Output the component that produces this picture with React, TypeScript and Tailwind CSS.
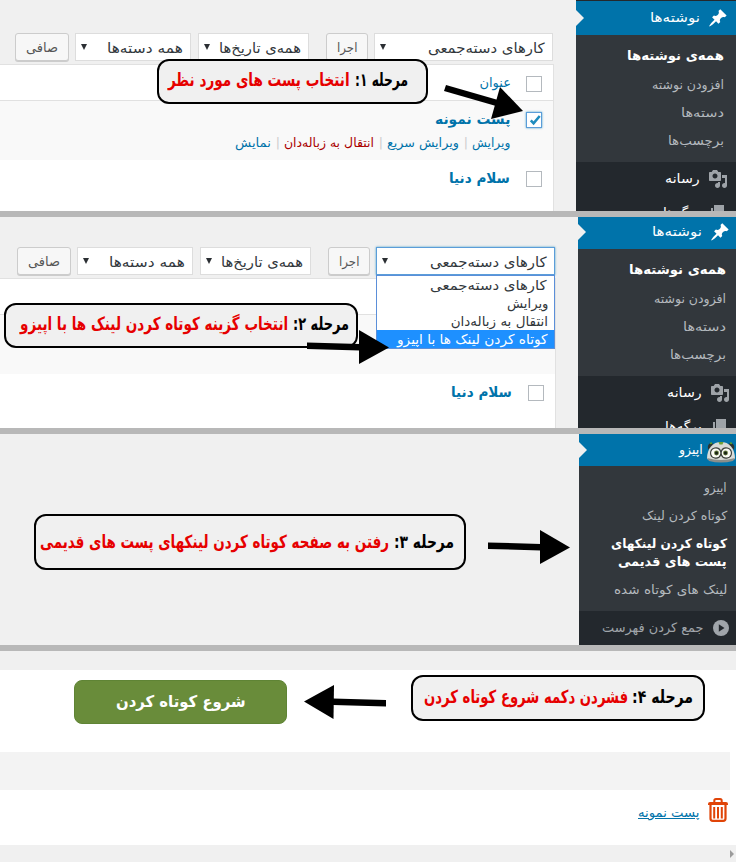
import { useLayoutEffect, useRef, useState, type ReactNode } from "react";
import clsx from "clsx";

/* One line of text, stretched horizontally to the width of its box. */
function Fit({ className, children }: { className: string; children: ReactNode }) {
  const outer = useRef<HTMLSpanElement>(null);
  const inner = useRef<HTMLSpanElement>(null);
  const [scale, setScale] = useState(1);
  useLayoutEffect(() => {
    if (outer.current && inner.current) {
      setScale(outer.current.clientWidth / inner.current.offsetWidth);
    }
  }, []);
  return (
    <span ref={outer} dir="rtl" className={clsx("block shrink-0", className)}>
      <span
        ref={inner}
        className="block w-max origin-right whitespace-nowrap"
        style={{ transform: `scaleX(${scale})` }}
      >
        {children}
      </span>
    </span>
  );
}

function PinIcon() {
  return (
    <svg viewBox="0 0 20 20" className="size-5 shrink-0 fill-white">
      <path d="M10.44 3.02l1.82-1.82 6.36 6.35-1.83 1.82c-1.05-.68-2.48-.57-3.41.36l-.75.75c-.92.93-1.04 2.35-.35 3.41l-1.83 1.82-2.41-2.41-2.8 2.79c-.42.42-3.38 2.71-3.8 2.29s1.86-3.39 2.28-3.81l2.79-2.79L4.1 9.36l1.83-1.82c1.05.69 2.48.57 3.4-.36l.75-.75c.93-.92 1.05-2.35.36-3.41z" />
    </svg>
  );
}

function MediaIcon() {
  return (
    <svg viewBox="0 0 20 20" className="size-5 shrink-0 fill-[#9ea3a8]">
      <path d="M13 11V4c0-.55-.45-1-1-1h-1.67L9 1H5L3.67 3H2c-.55 0-1 .45-1 1v7c0 .55.45 1 1 1h10c.55 0 1-.45 1-1zM7 4.5c1.38 0 2.5 1.12 2.5 2.5S8.38 9.5 7 9.5 4.5 8.38 4.5 7 5.62 4.5 7 4.5zM14 6h5v10.5c0 1.38-1.12 2.5-2.5 2.5S14 17.88 14 16.5s1.12-2.5 2.5-2.5c.17 0 .34.02.5.05V9h-3V6zm-4 8.05V13h2v3.5c0 1.38-1.12 2.5-2.5 2.5S7 17.88 7 16.5 8.12 14 9.5 14c.17 0 .34.02.5.05z" />
    </svg>
  );
}

function PagesIcon() {
  return (
    <svg viewBox="0 0 20 20" className="size-5 shrink-0 fill-[#9ea3a8]">
      <path d="M6 15V2h10v13H6zm-1 1h8v2H3V5h2v11z" />
    </svg>
  );
}

function RobotIcon() {
  return (
    <svg viewBox="0 0 30 22" className="h-[22px] w-[30px] shrink-0">
      <path d="M2 8Q1 3 5 2l3 1-4 6zM28 8q1-5-3-6l-3 1 4 6z" fill="#2d332f" />
      <path d="M4 2.500l2-.5M26 2.500l-2-.5" stroke="#5f9e2a" strokeWidth="1.4" />
      <path d="M1 18C1 7 7 1 15 1s14 6 14 17q-14 5-28 0z" fill="#d9dbd8" />
      <path d="M12.500 1h5l-1 2.500h-3z" fill="#6f9f35" />
      <path d="M1 17q14 4 28 0l-2 3q-12 3-24 0z" fill="#8b8e8a" />
      <path d="M4 12a5.800 5.800 0 0 1 11-2.500A5.800 5.800 0 0 1 26 12a5.800 5.800 0 0 1-11 2.500A5.800 5.800 0 0 1 4 12z" fill="#3a3f3a" />
      <circle cx="9.700" cy="12" r="4.600" fill="#fbfbf6" />
      <circle cx="20.300" cy="12" r="4.600" fill="#fbfbf6" />
      <circle cx="10.500" cy="12" r="2.400" fill="#5d7339" />
      <circle cx="19.500" cy="12" r="2.400" fill="#5d7339" />
      <circle cx="10.500" cy="12" r="1.500" fill="#182016" />
      <circle cx="19.500" cy="12" r="1.500" fill="#182016" />
    </svg>
  );
}

function TrashIcon() {
  return (
    <svg viewBox="0 0 20 24" className="h-6 w-5 shrink-0" fill="none" stroke="#e04408">
      <path d="M6.300 4V2.800Q6.300 1 8 1h4q1.700 0 1.700 1.800V4" strokeWidth="2" />
      <path d="M0 7V5.700Q0 4 2 4h16q2 0 2 1.700V7z" fill="#e04408" stroke="none" />
      <path d="M2.500 6v14.500q0 2.300 2.300 2.300h10.400q2.300 0 2.300-2.300V6" strokeWidth="2.200" />
      <path d="M6.200 9v11.500M10 9v11.500M13.800 9v11.500" strokeWidth="2" />
    </svg>
  );
}

function Notch() {
  return (
    <svg viewBox="0 0 8 16" className="h-4 w-2 shrink-0 fill-[#f0f0f0]">
      <path d="M0 0l8 8-8 8z" />
    </svg>
  );
}

function Arrow({ className, head, shaft }: { className: string; head: string; shaft: string }) {
  return (
    <svg className={clsx("absolute z-20 overflow-visible fill-black", className)}>
      <polygon points={shaft} />
      <polygon points={head} />
    </svg>
  );
}

interface CalloutProps {
  className: string;
  step: string;
  stepWidth: string;
  text: string;
  textWidth: string;
}

function Callout({ className, step, stepWidth, text, textWidth }: CalloutProps) {
  return (
    <div
      dir="rtl"
      className={clsx(
        "absolute z-10 flex justify-between rounded-[12px] border-2 border-black bg-[#f0f0f0] text-[18px] leading-5 font-bold",
        className,
      )}
    >
      <Fit className={stepWidth}>{step}</Fit>
      <Fit className={clsx("text-[#e60000]", textWidth)}>{text}</Fit>
    </div>
  );
}

function Checkbox({ checked = false }: { checked?: boolean }) {
  return (
    <span
      className={clsx(
        "flex size-4 shrink-0 items-center justify-center border bg-white",
        checked ? "border-[#5b9dd9] shadow-[0_0_2px_rgba(30,140,190,0.8)]" : "border-[#b4b9be]",
      )}
    >
      {checked && (
        <svg viewBox="0 0 14 14" className="size-3.5 fill-none stroke-[#1e8cbe] stroke-[2.6]">
          <path d="M3.800 7.300l2.800 3L12.700 3" />
        </svg>
      )}
    </span>
  );
}

function Select({ label, box, text, focused = false }: { label: string; box: string; text: string; focused?: boolean }) {
  return (
    <div
      className={clsx(
        "flex h-7 shrink-0 items-center justify-between border bg-white pr-[7px] pl-[5px] text-[14px] leading-5 text-[#32373c]",
        focused ? "border-[#5b9dd9] shadow-[0_0_2px_rgba(30,140,190,0.8)]" : "border-[#ddd]",
        box,
      )}
    >
      <Fit className={clsx("mt-px", text)}>{label}</Fit>
      <svg viewBox="0 0 6 6" className="mb-px size-1.5 fill-[#2b2f33]">
        <path d="M0 0h6L3 6z" />
      </svg>
    </div>
  );
}

function Button({ label, box, text }: { label: string; box: string; text: string }) {
  return (
    <div
      className={clsx(
        "flex h-7 shrink-0 items-center justify-center rounded-[3px] border border-[#ccc] bg-[#f7f7f7] text-[13px] leading-5 text-[#555] shadow-[0_1px_0_#ccc]",
        box,
      )}
    >
      <Fit className={clsx("mt-px", text)}>{label}</Fit>
    </div>
  );
}

function Toolbar({ focused = false }: { focused?: boolean }) {
  return (
    <div className="flex pr-[23px]">
      <Select label="کارهای دسته‌جمعی" box="w-[179px]" text="w-[117px]" focused={focused} />
      <Button label="اجرا" box="mr-[6px] w-[42px]" text="w-5" />
      <Select label="همه‌ی تاریخ‌ها" box="mr-[17px] w-[111px]" text="w-[82px]" />
      <Select label="همه دسته‌ها" box="mr-[7px] w-[116px]" text="w-[76px]" />
      <Button label="صافی" box="mr-[6px] w-[54px]" text="w-8" />
    </div>
  );
}

function PostsMenu({ className }: { className: string }) {
  return (
    <aside className={clsx("flex w-40 shrink-0 flex-col overflow-hidden bg-[#23282d] text-white", className)}>
      <div className="flex h-[34px] shrink-0 items-center bg-[#0073aa] pr-2 text-[13px] leading-5">
        <PinIcon />
        <Fit className="mr-2 w-[50px]">نوشته‌ها</Fit>
        <span className="mr-auto">
          <Notch />
        </span>
      </div>
      <div className="flex h-[127px] shrink-0 flex-col bg-[#32373c] pt-[7px] pr-3 text-[12.500px] leading-7 text-[#b4b9be]">
        <Fit className="h-[29px] w-[97px] text-[13px] font-bold text-white">همه‌ی نوشته‌ها</Fit>
        <Fit className="h-7 w-[72px]">افزودن نوشته</Fit>
        <Fit className="h-7 w-[43px]">دسته‌ها</Fit>
        <Fit className="h-7 w-[56px]">برچسب‌ها</Fit>
      </div>
      <div className="flex h-[34px] shrink-0 items-center pr-2 text-[13px] leading-5">
        <MediaIcon />
        <Fit className="mr-2 w-[35px]">رسانه</Fit>
      </div>
      <div className="flex h-[34px] shrink-0 items-center pr-2 text-[13px] leading-5">
        <PagesIcon />
        <Fit className="mr-2 w-[37px]">برگه‌ها</Fit>
      </div>
    </aside>
  );
}

function SelectPanel() {
  return (
    <section dir="rtl" className="flex h-[211px] shrink-0 overflow-hidden bg-[#f0f0f0]">
      <PostsMenu className="h-[211px] border-t border-[#23282d]" />
      <div className="flex flex-1 flex-col pt-[33px]">
        <Toolbar />
        <div className="mt-[3px] mr-[22px] flex flex-1 flex-col border-t border-r border-[#e1e1e1] bg-white">
          <div className="flex h-9 items-start border-b border-[#e1e1e1] pt-[11px] pr-[11px]">
            <Checkbox />
            <Fit className="mr-[15px] -mt-[3px] w-8 text-[13px] leading-5 text-[#0073aa]">عنوان</Fit>
          </div>
          <div className="flex h-[59px] items-start bg-[#f9f9f9] pt-[11px] pr-[11px] text-[#0073aa]">
            <Checkbox checked />
            <div className="mr-4 -mt-[5px]">
              <Fit className="w-[75px] text-[14px] leading-6 font-bold">پست نمونه</Fit>
              <div className="flex text-[12.500px] leading-6 text-[#ccc]">
                <Fit className="w-[38px] text-[#0073aa]">ویرایش</Fit>
                <Fit className="mx-1 w-1">|</Fit>
                <Fit className="mr-px w-[72px] text-[#0073aa]">ویرایش سریع</Fit>
                <Fit className="mx-1 w-1">|</Fit>
                <Fit className="mr-px w-[90px] text-[#a00]">انتقال به زباله‌دان</Fit>
                <Fit className="mx-1 w-1">|</Fit>
                <Fit className="mr-px w-[36px] text-[#0073aa]">نمایش</Fit>
              </div>
            </div>
          </div>
          <div className="flex items-start pt-[11px] pr-[11px] text-[#0073aa]">
            <Checkbox />
            <Fit className="mr-4 -mt-[5px] w-[61px] text-[14px] leading-6 font-bold">سلام دنیا</Fit>
          </div>
        </div>
      </div>
    </section>
  );
}

function BulkActionPanel() {
  return (
    <section dir="rtl" className="flex h-[211px] shrink-0 overflow-hidden bg-[#f0f0f0]">
      <PostsMenu className="-mt-[2px] -mr-[2px] h-[213px]" />
      <div className="relative flex flex-1 flex-col pt-[30px]">
        <Toolbar focused />
        <div className="absolute top-[58px] right-[23px] z-10 flex h-[74px] w-[179px] flex-col border border-[#5b8fd9] bg-white text-[13.500px] leading-[18px] text-[#32373c]">
          <div className="h-[18px] pr-[7px]"><Fit className="w-[117px]">کارهای دسته‌جمعی</Fit></div>
          <div className="h-[18px] pr-[6px]"><Fit className="w-[41px]">ویرایش</Fit></div>
          <div className="h-[18px] pr-[6px]"><Fit className="w-[97px]">انتقال به زباله‌دان</Fit></div>
          <div className="h-[18px] bg-[#1e90ff] pr-[6px] text-white"><Fit className="w-[151px]">کوتاه کردن لینک ها با اپیزو</Fit></div>
        </div>
        <div className="mt-[3px] mr-[22px] flex flex-1 flex-col border-t border-r border-[#e1e1e1] bg-white">
          <div className="h-9 border-b border-[#e1e1e1]" />
          <div className="h-[59px] bg-[#f9f9f9]" />
          <div className="flex items-start pt-[11px] pr-[11px] text-[#0073aa]">
            <Checkbox />
            <Fit className="mr-4 -mt-[5px] w-[61px] text-[14px] leading-6 font-bold">سلام دنیا</Fit>
          </div>
        </div>
      </div>
    </section>
  );
}

function ShortenerPanel() {
  return (
    <section dir="rtl" className="flex h-[211px] shrink-0 bg-[#f0f0f0]">
      <aside className="flex w-[157px] flex-col bg-[#23282d] text-white">
        <div className="flex h-8 items-center bg-[#0073aa] text-[13px] leading-5">
          <span className="mt-[3px]"><RobotIcon /></span>
          <Fit className="mr-[3px] w-6">اپیزو</Fit>
          <span className="mr-auto"><Notch /></span>
        </div>
        <div className="flex h-[145px] flex-col bg-[#32373c] pt-2 pr-[9px] text-[12.500px] leading-7 text-[#b4b9be]">
          <Fit className="h-7 w-[23px]">اپیزو</Fit>
          <Fit className="h-[33px] w-[85px]">کوتاه کردن لینک</Fit>
          <div className="h-[41px] text-[13px] leading-[18px] font-bold text-white">
            <Fit className="w-[116px]">کوتاه کردن لینکهای</Fit>
            <Fit className="w-[109px]">پست های قدیمی</Fit>
          </div>
          <Fit className="h-7 w-[113px]">لینک های کوتاه شده</Fit>
        </div>
        <div className="flex h-[34px] items-center pr-[7px] text-[13px] leading-5 text-[#a0a5aa]">
          <svg viewBox="0 0 16 16" className="size-4 shrink-0">
            <circle cx="8" cy="8" r="8" fill="#a0a5aa" />
            <path d="M5.800 4.200L11.500 8l-5.700 3.800z" fill="#23282d" />
          </svg>
          <Fit className="mr-[10px] w-[101px]">جمع کردن فهرست</Fit>
        </div>
      </aside>
    </section>
  );
}

function StartPanel() {
  return (
    <section dir="rtl" className="flex h-[211px] shrink-0 flex-col bg-white">
      <div className="h-[19px] bg-[#f0f0f0]" />
      <div className="flex h-[82px] justify-end pt-[10px] pl-[74px]">
        <div className="flex h-11 w-[213px] items-center justify-center rounded-lg border border-[#5f8435] bg-[#698c3a] text-[16px] leading-6 font-bold text-white">
          <Fit className="w-[130px]">شروع کوتاه کردن</Fit>
        </div>
      </div>
      <div className="mr-1.5 h-[38px] bg-[#f3f3f3]" />
      <div className="flex h-[55px] items-start pt-2 pr-2">
        <TrashIcon />
        <Fit className="mt-[5px] mr-2 w-[62px] text-[13px] leading-5 text-[#0073aa] underline">پست نمونه</Fit>
      </div>
      <div className="flex h-[17px] items-start bg-[#f0f0f0] pt-[5px] pr-[2px]">
        <svg viewBox="0 0 4 8" className="h-2 w-1 fill-[#9b9b9b]">
          <path d="M0 0l4 4-4 4z" />
        </svg>
      </div>
    </section>
  );
}

function Divider() {
  return <div className="h-1.5 shrink-0 bg-[#b8b8b8]" />;
}

export default function App() {
  return (
    <main className="relative flex h-[862px] w-[736px] flex-col overflow-hidden bg-[#f0f0f0] font-['DejaVu_Sans',sans-serif]">
      <SelectPanel />
      <Divider />
      <BulkActionPanel />
      <Divider />
      <ShortenerPanel />
      <Divider />
      <StartPanel />

      <Callout className="top-[59px] left-[157px] h-[45px] w-[271px] pt-[9px] pr-[18px] pl-[9px]" step="مرحله ۱:" stepWidth="w-[53px]" text="انتخاب پست های مورد نظر" textWidth="w-[182px]" />
      <Callout className="top-[303px] left-[4px] h-[45px] w-[354px] pt-[9px] pr-[7px] pl-[14px]" step="مرحله ۲:" stepWidth="w-[56px]" text="انتخاب گزینه کوتاه کردن لینک ها با اپیزو" textWidth="w-[268px]" />
      <Callout className="top-[514px] left-[34px] h-[56px] w-[432px] pt-[16px] pr-[10px] pl-[4px]" step="مرحله ۳:" stepWidth="w-[60px]" text="رفتن به صفحه کوتاه کردن لینکهای پست های قدیمی" textWidth="w-[349px]" />
      <Callout className="top-[675px] left-[411px] h-[46px] w-[294px] pt-[10px] pr-[10px] pl-[11px]" step="مرحله ۴:" stepWidth="w-[61px]" text="فشردن دکمه شروع کوتاه کردن" textWidth="w-[204px]" />

      <Arrow className="top-[85px] left-[444px] h-[34px] w-[80px]" shaft="2,0 0,6 52,21 54,15" head="56,2 79,26 47,34" />
      <Arrow className="top-[330px] left-[307px] h-[34px] w-[82px]" shaft="0,12.5 0,19 53,20.5 53,14" head="52,0 82,17.5 52,34" />
      <Arrow className="top-[530px] left-[488px] h-[34px] w-[82px]" shaft="0,12.5 0,19 53,20.5 53,14" head="52,0 82,17.5 52,34" />
      <Arrow className="top-[685px] left-[304px] h-[34px] w-[82px]" shaft="29,13.5 82,15 82,21.5 29,20" head="30,0 0,16.5 29.500,34" />
    </main>
  );
}
